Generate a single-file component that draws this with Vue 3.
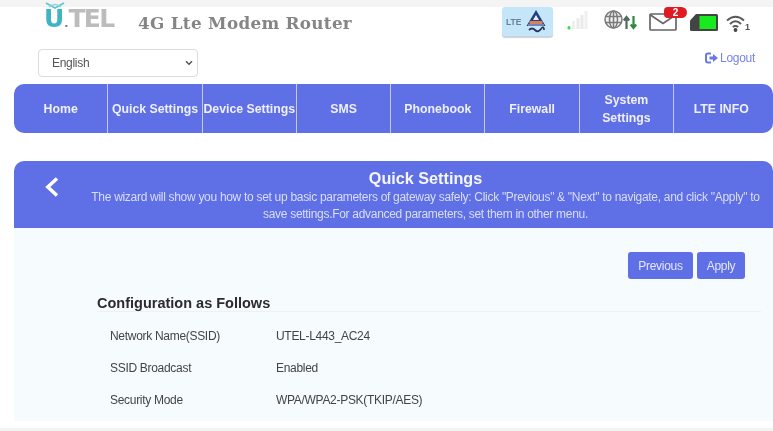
<script setup>
const navItems = ['Home', 'Quick Settings', 'Device Settings', 'SMS', 'Phonebook', 'Firewall', 'System Settings', 'LTE INFO']
const rows = [
  { label: 'Network Name(SSID)', value: 'UTEL-L443_AC24' },
  { label: 'SSID Broadcast', value: 'Enabled' },
  { label: 'Security Mode', value: 'WPA/WPA2-PSK(TKIP/AES)' }
]
</script>

<template>
  <div class="page">
    <div class="strip top-strip"></div>

    <header class="header">
      <div class="brand">
        <div class="logo">
          <svg class="owl" width="22" height="8" viewBox="0 0 22 8">
            <path d="M2 1 L11 6 L20 1" fill="none" stroke="#5fc4cf" stroke-width="1.6" />
            <path d="M5 5 Q11 0 17 5" fill="none" stroke="#8ad6dd" stroke-width="1.4" />
          </svg>
          <span class="logo-u">U</span><span class="logo-dot">.</span><span class="logo-tel">TEL</span>
        </div>
        <div class="product">4G Lte Modem Router</div>
      </div>

      <div class="status">
        <div class="lte-tile">
          <span class="lte-text">LTE</span>
          <svg width="22" height="26" viewBox="0 0 22 26">
            <path d="M11 1 L20.500 17 H1.500 Z" fill="#24407f" />
            <path d="M11 6 L14 11 H8 Z" fill="#e6eff8" />
            <path d="M4.500 12 H17.500 V15 H4.500 Z" fill="#d9815a" />
            <path d="M3 15 H19 V17 H3 Z" fill="#6f86b3" />
            <path d="M4 21 Q7 18 10 21 T16 20 T19 21" fill="none" stroke="#26365f" stroke-width="1.8" />
          </svg>
        </div>

        <svg class="signal" width="21" height="20" viewBox="0 0 21 20">
          <rect x="0.500" y="16" width="3" height="3.500" rx="1.500" fill="#3bdc4c" />
          <rect x="5" y="11" width="3" height="8" fill="#f0f0f0" />
          <rect x="9.500" y="8" width="3" height="11" fill="#eaeaea" />
          <rect x="13.500" y="5" width="3" height="14" fill="#eaeaea" />
          <rect x="17.500" y="1" width="3" height="18" fill="#f0f0f0" />
        </svg>

        <svg class="globe" width="34" height="21" viewBox="0 0 34 21">
          <g fill="#f0f0f0" stroke="#7a7a7a" stroke-width="1.500">
            <circle cx="9.500" cy="9.500" r="8.500" />
            <ellipse cx="9.500" cy="9.500" rx="4" ry="8.500" />
            <path d="M9.500 1 V18 M1.500 6.500 H17.500 M1.500 12.500 H17.500" fill="none" />
          </g>
          <path d="M22.500 19 V8 M19.800 10.500 L22.500 7 L25.200 10.500" fill="none" stroke="#4d6a5c" stroke-width="2.200" />
          <path d="M29.500 6 V17 M26.800 14.500 L29.500 18 L32.200 14.500" fill="none" stroke="#2f8a3c" stroke-width="2.200" />
        </svg>

        <div class="mail">
          <svg width="28" height="18" viewBox="0 0 28 18">
            <rect x="1" y="1" width="26" height="16" rx="1" fill="#fff" stroke="#666" stroke-width="1.700" />
            <path d="M1.500 2 L14 10.500 L26.500 2" fill="none" stroke="#666" stroke-width="1.700" />
          </svg>
          <span class="badge">2</span>
        </div>

        <svg class="battery" width="28" height="17" viewBox="0 0 28 17">
          <path d="M6 0 H26.500 Q28 0 28 1.500 V15.500 Q28 17 26.500 17 H1.500 Q0 17 0 15.500 V6.500 Z" fill="#444" />
          <rect x="9.500" y="2" width="16.500" height="13" fill="#17ea1f" />
        </svg>

        <div class="wifi">
          <svg width="19" height="17" viewBox="0 0 19 17">
            <g fill="none" stroke="#5a5a5a" stroke-width="1.900">
              <path d="M1 5.500 Q9.500 -2 18 5.500" />
              <path d="M4 9 Q9.500 3.500 15 9" />
              <path d="M6.800 12 Q9.500 9.800 12.200 12" />
            </g>
            <circle cx="9.500" cy="15" r="1.900" fill="#444" />
          </svg>
          <span class="wifi-count">1</span>
        </div>
      </div>
    </header>

    <div class="toolbar">
      <div class="select-wrap">
        <select class="language">
          <option>English</option>
        </select>
        <svg class="chevron" width="8" height="6" viewBox="0 0 8 6">
          <path d="M1 1.200 L4 4.200 L7 1.200" fill="none" stroke="#555" stroke-width="1.500" />
        </svg>
      </div>
      <a class="logout">
        <svg width="14" height="12" viewBox="0 0 14 12">
          <path d="M6 1.500 H3 Q1 1.500 1 3.500 V8.500 Q1 10.500 3 10.500 H6" fill="none" stroke="#6a78e6" stroke-width="2" />
          <path d="M4.500 4.500 H8 V2 L13 6 L8 10 V7.500 H4.500 Z" fill="#6a78e6" />
        </svg>
        <span>Logout</span>
      </a>
    </div>

    <nav class="nav">
      <div v-for="item in navItems" :key="item" class="nav-item">{{ item }}</div>
    </nav>

    <main class="panel">
      <section class="panel-head">
        <svg class="back" width="14" height="20" viewBox="0 0 14 20">
          <path d="M12 1.500 L2.800 10 L12 18.500" fill="none" stroke="#fff" stroke-width="3.500" />
        </svg>
        <h1>Quick Settings</h1>
        <p>The wizard will show you how to set up basic parameters of gateway safely: Click "Previous" &amp; "Next" to navigate, and click "Apply" to save settings.For advanced parameters, set them in other menu.</p>
      </section>

      <section class="panel-body">
        <div class="actions">
          <button class="btn">Previous</button>
          <button class="btn">Apply</button>
        </div>
        <div class="config">
          <h2>Configuration as Follows</h2>
          <div v-for="row in rows" :key="row.label" class="row">
            <span class="row-label">{{ row.label }}</span>
            <span class="row-value">{{ row.value }}</span>
          </div>
        </div>
      </section>
    </main>

    <div class="strip bottom-strip"></div>
  </div>
</template>

<style>
html, body { margin: 0; background: #fff; overflow: hidden; }
</style>

<style scoped>
.page {
  width: 773px;
  height: 431px;
  overflow: hidden;
  display: flex;
  flex-direction: column;
  font-family: "Liberation Sans", Arial, sans-serif;
  background: #fff;
  filter: blur(0.45px);
}
.strip { background: #f4f4f4; flex: none; }
.top-strip { height: 7px; }
.bottom-strip { height: 3px; margin-top: auto; }

.header {
  height: 31px;
  flex: none;
  display: flex;
  justify-content: space-between;
  align-items: flex-start;
  padding: 0 24px 0 44px;
}
.brand { display: flex; align-items: center; height: 27px; gap: 25px; }
.logo {
  position: relative;
  font-family: "DejaVu Sans", sans-serif;
  font-weight: 700;
  font-size: 25px;
  line-height: 25px;
  width: 69px;
  white-space: nowrap;
  flex: none;
}
.owl { position: absolute; left: 0; top: -4px; }
.logo-u { color: #3fb4c4; }
.logo-dot { color: #777; font-size: 11px; }
.logo-tel { color: #bcbcbc; letter-spacing: -1.700px; }
.product {
  font-family: "DejaVu Serif", serif;
  font-weight: 700;
  font-size: 16.800px;
  color: #858585;
  letter-spacing: 0.300px;
  white-space: nowrap;
  position: relative;
  top: 2px;
}

.status { display: flex; align-items: flex-start; }
.lte-tile {
  width: 51px;
  height: 29px;
  box-sizing: border-box;
  background: #c5e5f8;
  border-radius: 3px;
  box-shadow: 0 2px 1px #c9d3dc;
  display: flex;
  align-items: center;
  justify-content: space-between;
  padding: 0 6px 0 4px;
}
.lte-text { font-size: 8.500px; font-weight: 700; color: #6b7f96; }
.signal { margin: 3px 0 0 14px; flex: none; }
.globe { margin: 3px 0 0 16px; flex: none; }
.mail { position: relative; margin: 6px 0 0 11px; width: 28px; height: 18px; flex: none; }
.badge {
  position: absolute;
  left: 15px;
  top: -6px;
  width: 23px;
  height: 11px;
  border-radius: 4px 6px 6px 4px;
  background: #e01a22;
  color: #fff;
  font-size: 10px;
  font-weight: 700;
  line-height: 11px;
  text-align: center;
}
.battery { margin: 7px 0 0 13px; flex: none; }
.wifi { display: flex; align-items: flex-end; margin: 8px 0 0 8px; width: 23px; height: 17px; flex: none; }
.wifi svg { flex: none; }
.wifi-count { font-size: 9px; font-weight: 700; color: #555; line-height: 9px; }

.toolbar {
  height: 35px;
  flex: none;
  margin-top: 11px;
  box-sizing: border-box;
  padding: 0 18px 0 38px;
  display: flex;
  justify-content: space-between;
}
.select-wrap { position: relative; width: 160px; height: 28px; }
.language {
  appearance: none;
  width: 160px;
  height: 28px;
  box-sizing: border-box;
  padding-left: 13px;
  border: 1px solid #dcdcdc;
  border-radius: 4px;
  background: #fff;
  color: #555;
  font: 12px "Liberation Sans", Arial, sans-serif;
  letter-spacing: -0.300px;
}
.chevron { position: absolute; right: 5px; top: 11px; pointer-events: none; }
.logout {
  display: flex;
  align-items: center;
  gap: 1px;
  height: 17px;
  color: #7683e8;
  font-size: 12px;
  letter-spacing: -0.300px;
}

.nav {
  flex: none;
  height: 49px;
  margin-left: 14px;
  display: grid;
  grid-template-columns: repeat(8, 94.300px) 1fr;
  background: #5f6fe6;
  border-radius: 10px;
}
.nav-item {
  display: flex;
  align-items: center;
  justify-content: center;
  text-align: center;
  padding: 0 8px;
  color: #eef0fd;
  font-size: 12.300px;
  font-weight: 700;
  line-height: 18px;
  border-right: 1px solid #c3c9f3;
}
.nav-item:nth-child(2), .nav-item:nth-child(3) { padding: 0; white-space: nowrap; }
.nav-item:last-child { border-right: none; }

.panel { flex: none; margin: 28px 0 0 14px; }
.panel-head {
  position: relative;
  height: 67px;
  box-sizing: border-box;
  background: #5f6fe6;
  border-radius: 10px 10px 0 0;
  color: #fff;
  text-align: center;
  padding: 8px 8px 0 72px;
}
.back { position: absolute; left: 31px; top: 16px; }
h1 { margin: 0; font-size: 16.200px; font-weight: 700; line-height: 19px; color: #f5f6fe; }
.panel-head p {
  margin: 1px 0 0;
  font-size: 12px;
  line-height: 17px;
  color: #d9def9;
  letter-spacing: -0.300px;
}

.panel-body {
  height: 193px;
  box-sizing: border-box;
  background: #f6fbfe;
  padding: 24px 28px 0 83px;
}
.actions { display: flex; justify-content: flex-end; gap: 4px; }
.btn {
  height: 27px;
  border: none;
  border-radius: 3px;
  background: #5f6fe6;
  color: #e3e6fb;
  font: 12px "Liberation Sans", Arial, sans-serif;
  letter-spacing: -0.300px;
  padding: 0;
  width: 65px;
}
.btn:last-child { width: 48px; }

.config { margin-top: 16px; margin-right: -16px; }
h2 {
  margin: 0 0 8px;
  height: 16px;
  font-size: 14.500px;
  font-weight: 700;
  line-height: 16px;
  color: #2c2c2c;
  border-bottom: 1px solid #eef1f3;
}
.row {
  display: flex;
  height: 32px;
  align-items: center;
  padding-left: 13px;
  font-size: 12px;
  letter-spacing: -0.300px;
  color: #444;
}
.row-label { width: 166px; }
</style>
